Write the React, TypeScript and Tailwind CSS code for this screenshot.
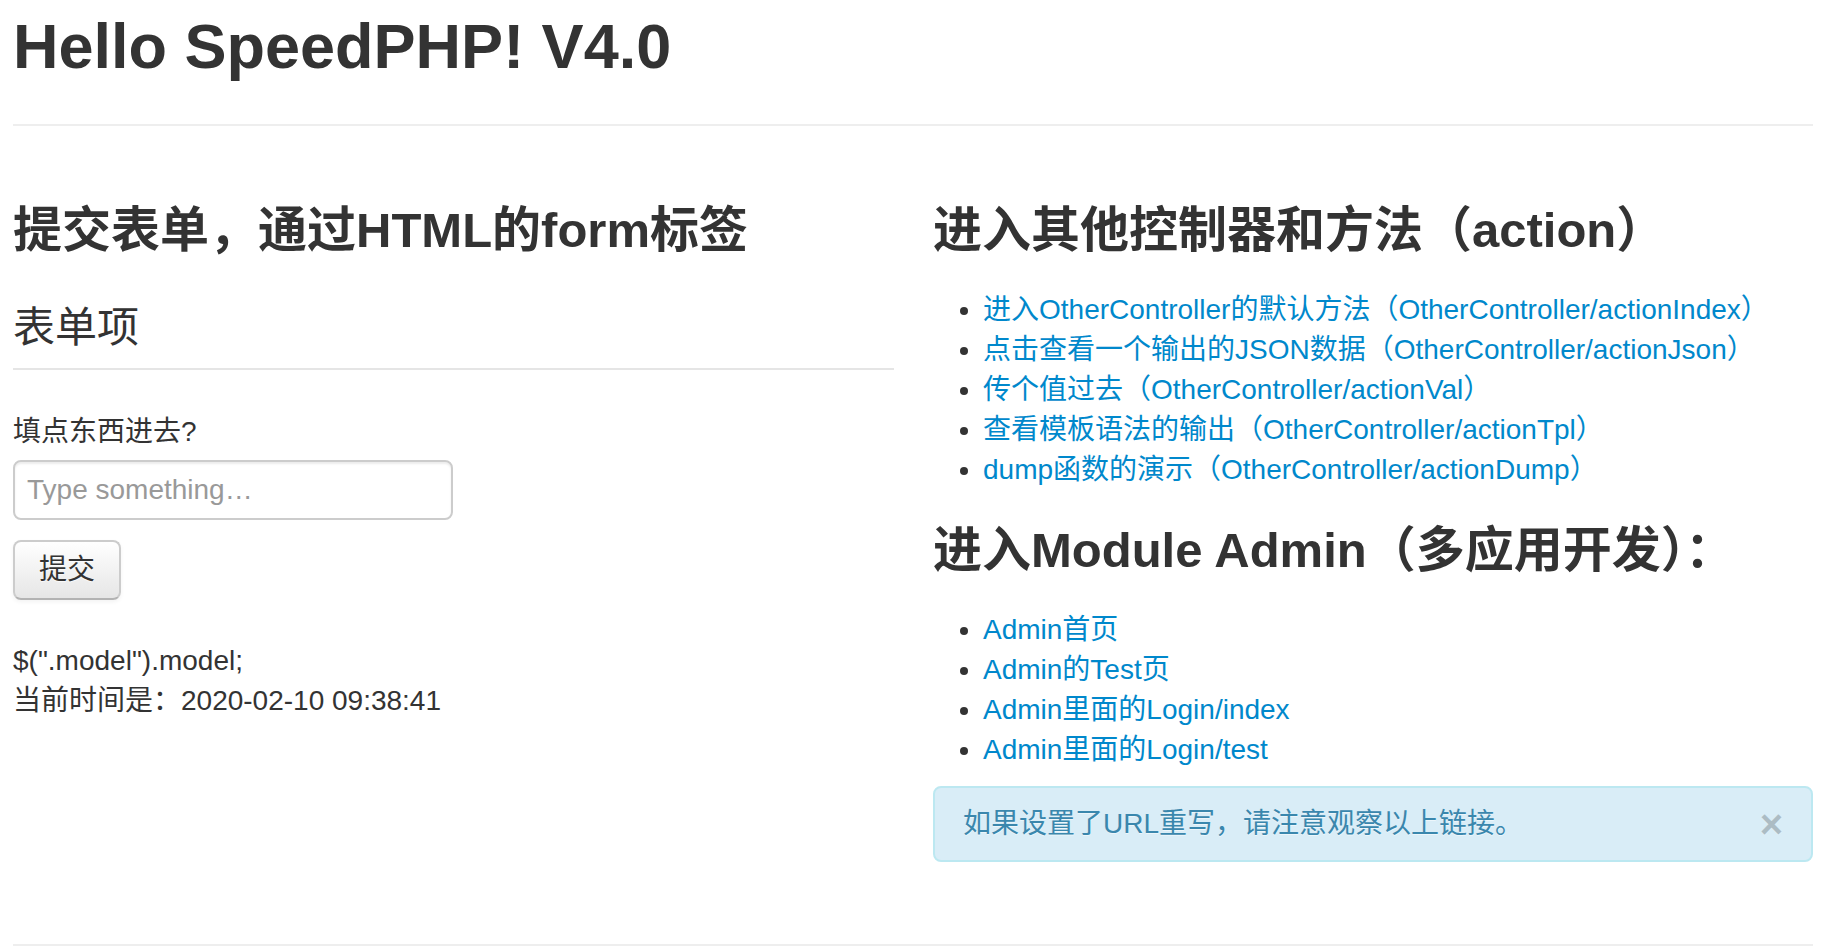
import React from "react";

/* 控制器链接 */
const controllerLinks = [
  "进入OtherController的默认方法（OtherController/actionIndex）",
  "点击查看一个输出的JSON数据（OtherController/actionJson）",
  "传个值过去（OtherController/actionVal）",
  "查看模板语法的输出（OtherController/actionTpl）",
  "dump函数的演示（OtherController/actionDump）",
];

const adminLinks = [
  "Admin首页",
  "Admin的Test页",
  "Admin里面的Login/index",
  "Admin里面的Login/test",
];

const LinkList = ({ items, className = "mb-[20px]" }: { items: string[]; className?: string }) => (
  <ul className={`list-disc pl-[50px] ${className}`}>
    {items.map((t) => (
      <li key={t} className="leading-[40px]">
        <a href="#" className="text-[#0088cc] no-underline">
          {t}
        </a>
      </li>
    ))}
  </ul>
);

export default function App() {
  return (
    <div className="min-h-screen bg-white text-[#333] text-[28px] leading-[40px] font-['Liberation_Sans','Noto_Sans_CJK_SC',sans-serif]">
      <div className="w-[1800px] ml-[13px] pt-[6px]">
        {/* 标题 */}
        <h2 className="text-[63px] font-bold leading-[80px]">Hello SpeedPHP! V4.0</h2>
        <hr className="mt-[38px] border-0 border-t-2 border-t-[#eee] border-b-2 border-b-white" />

        <div className="grid grid-cols-[881px_880px] gap-x-[39px] mt-[62px]">
          {/* 左侧：表单 */}
          <div>
            <h3 className="text-[49px] font-bold leading-[80px] mb-[18px]">
              提交表单，通过HTML的form标签
            </h3>
            <form onSubmit={(e) => e.preventDefault()}>
              <div className="text-[42px] leading-[80px] border-b-2 border-[#e5e5e5] mb-[40px]">
                表单项
              </div>
              <label className="block pt-[2px] mb-[8px]">填点东西进去?</label>
              <input
                type="text"
                placeholder="Type something…"
                className="block w-[440px] h-[60px] px-[12px] py-[8px] border-2 border-[#ccc] rounded-[8px] text-[28px] text-[#555] placeholder:text-[#999] shadow-[inset_0_2px_2px_rgba(0,0,0,0.075)] outline-none mb-[20px]"
              />
              <button
                type="submit"
                className="h-[60px] px-[24px] border-2 border-[#ccc] border-b-[#b3b3b3] rounded-[8px] bg-gradient-to-b from-white to-[#e6e6e6] text-[28px] leading-[40px] text-[#333] shadow-[inset_0_2px_0_rgba(255,255,255,0.2),0_2px_4px_rgba(0,0,0,0.05)] [text-shadow:0_1px_1px_rgba(255,255,255,0.75)]"
              >
                提交
              </button>
            </form>
            <div className="mt-[41px]">
              <p>$(".model").model;</p>
              <p>当前时间是：2020-02-10 09:38:41</p>
            </div>
          </div>

          {/* 右侧：链接 */}
          <div>
            <h3 className="text-[49px] font-bold leading-[80px] mb-[20px]">
              进入其他控制器和方法（action）
            </h3>
            <LinkList items={controllerLinks} />
            <h3 className="text-[49px] font-bold leading-[80px] mb-[20px]">
              进入Module Admin（多应用开发）：
            </h3>
            <LinkList items={adminLinks} className="mb-[16px]" />
            <div className="flex items-center justify-between h-[76px] pl-[28px] pr-[28px] border-2 border-[#bce8f1] rounded-[8px] bg-[#d9edf7] text-[#3a87ad] [text-shadow:0_1px_0_rgba(255,255,255,0.5)] mb-[40px]">
              <span>如果设置了URL重写，请注意观察以上链接。</span>
              <span className="text-[40px] font-bold leading-[40px] text-black opacity-20 [text-shadow:0_1px_0_#fff]">
                ×
              </span>
            </div>
          </div>
        </div>

        <hr className="mt-[42px] border-0 border-t-2 border-t-[#eee] border-b-2 border-b-white" />
        <p className="py-[20px]">&nbsp;</p>
      </div>
    </div>
  );
}
